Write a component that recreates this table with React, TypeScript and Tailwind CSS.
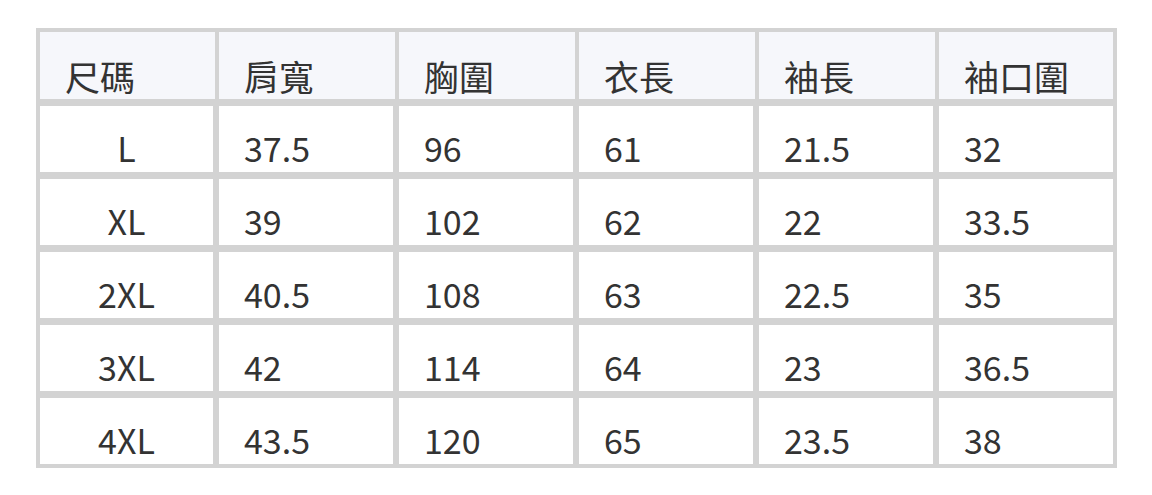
import React from "react";

const headers = ["尺碼", "肩寬", "胸圍", "衣長", "袖長", "袖口圍"];

const rows = [
  ["L", "37.5", "96", "61", "21.5", "32"],
  ["XL", "39", "102", "62", "22", "33.5"],
  ["2XL", "40.5", "108", "63", "22.5", "35"],
  ["3XL", "42", "114", "64", "23", "36.5"],
  ["4XL", "43.5", "120", "65", "23.5", "38"],
];

export default function App() {
  return (
    <div
      className="w-[1152px] h-[495px] bg-white pt-[28px] pl-[36px] text-[#333333]"
      style={{ fontFamily: '"Noto Sans CJK TC", "Noto Sans", sans-serif' }}
    >
      <div className="w-[1081px] bg-[#d3d3d3] p-[4px] flex flex-col gap-[7px]">
        <div className="grid grid-cols-[175px_176px_176px_176px_176px_174px] gap-x-[4px] h-[67px]">
          {headers.map((h) => (
            <div
              key={h}
              className="bg-[#f6f7fb] flex items-end pl-[25px] pb-[6px] text-[35px] leading-[35px]"
            >
              {h}
            </div>
          ))}
        </div>
        {rows.map((r) => (
          <div
            key={r[0]}
            className="grid grid-cols-[175px_176px_176px_176px_176px_174px] gap-x-[4px] h-[66px]"
          >
            {r.map((c, j) => (
              <div
                key={j}
                className={`bg-white flex items-end pb-[7px] text-[34px] leading-[34px] ${
                  j === 0 ? "justify-center mr-[2px]" : j === 5 ? "pl-[25px]" : "pl-[25px] mr-[2px]"
                }`}
              >
                {c}
              </div>
            ))}
          </div>
        ))}
      </div>
    </div>
  );
}
